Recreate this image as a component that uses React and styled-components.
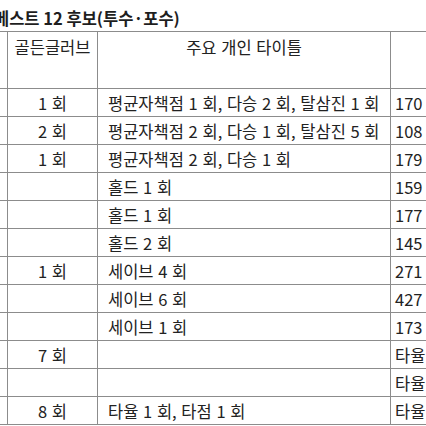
import React from "react";
import styled, { createGlobalStyle } from "styled-components";

const Global = createGlobalStyle`
  html, body { margin: 0; padding: 0; background: #fff; overflow: hidden; }
  body { font-family: "Noto Sans CJK KR", "Noto Sans", sans-serif; color: #222; }
`;

const Page = styled.div`
  width: 426px;
  height: 426px;
  overflow: hidden;
  position: relative;
  background: #fff;
`;

const Title = styled.div`
  margin: 7px 0 0 -6px;
  height: 24px;
  font-size: 16.5px;
  font-weight: 700;
  line-height: 22px;
  color: #1e1e1e;
  white-space: nowrap;
`;

const Table = styled.table`
  border-collapse: collapse;
  margin-left: -33px;
  width: 503px;
  min-width: 503px;
  table-layout: fixed;
  font-size: 16.5px;
  line-height: 20px;
  color: #222;
`;

const Row = styled.tr`
  height: ${(p) => p.$h}px;
`;

const Cell = styled.td`
  border: 1px solid #8c8c8c;
  padding: 0;
  padding-left: ${(p) => (p.$align === "left" ? (p.$pl ?? 10) : 0)}px;
  text-align: ${(p) => p.$align || "center"};
  vertical-align: middle;
  white-space: nowrap;
  overflow: hidden;
  line-height: 20px;
  word-spacing: 1px;
`;

const HeadCell = styled(Cell)`
  vertical-align: top;
  padding-top: 5px;
`;

const rows = [
  ["1 회", "평균자책점 1 회, 다승 2 회, 탈삼진 1 회", "170"],
  ["2 회", "평균자책점 2 회, 다승 1 회, 탈삼진 5 회", "108"],
  ["1 회", "평균자책점 2 회, 다승 1 회", "179"],
  ["", "홀드 1 회", "159"],
  ["", "홀드 1 회", "177"],
  ["", "홀드 2 회", "145"],
  ["1 회", "세이브 4 회", "271"],
  ["", "세이브 6 회", "427"],
  ["", "세이브 1 회", "173"],
  ["7 회", "", "타율"],
  ["", "", "타율"],
  ["8 회", "타율 1 회, 타점 1 회", "타율"],
];

export default function App() {
  return (
    <Page>
      <Global />
      <Title>베스트 12 후보(투수·포수)</Title>
      <Table>
        <colgroup>
          <col style={{ width: 40 }} />
          <col style={{ width: 90 }} />
          <col style={{ width: 293 }} />
          <col style={{ width: 80 }} />
        </colgroup>
        <tbody>
          <Row $h={57}>
            <HeadCell />
            <HeadCell>골든글러브</HeadCell>
            <HeadCell>주요 개인 타이틀</HeadCell>
            <HeadCell />
          </Row>
          {rows.map((r, i) => (
            <Row key={i} $h={28}>
              <Cell />
              <Cell>{r[0]}</Cell>
              <Cell $align="left" $pl={10}>{r[1]}</Cell>
              <Cell $align="left" $pl={4}>{r[2]}</Cell>
            </Row>
          ))}
        </tbody>
      </Table>
    </Page>
  );
}
